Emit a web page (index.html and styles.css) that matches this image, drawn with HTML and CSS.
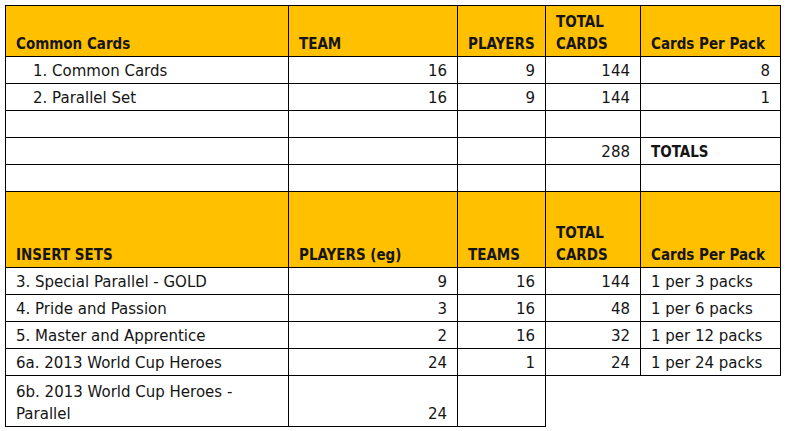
FILE: index.html
```html
<!DOCTYPE html>
<html>
<head>
<meta charset="utf-8">
<link rel="stylesheet" href="styles.css">
</head>
<body>
<table class="sheet">
  <colgroup>
    <col class="c1"><col class="c2"><col class="c3"><col class="c4"><col class="c5">
  </colgroup>
  <tbody>
    <tr class="head h1">
      <td>Common Cards</td><td>TEAM</td><td>PLAYERS</td><td>TOTAL<br>CARDS</td><td>Cards Per Pack</td>
    </tr>
    <tr class="row">
      <td class="ind">1. Common Cards</td><td class="num">16</td><td class="num">9</td><td class="num">144</td><td class="num">8</td>
    </tr>
    <tr class="row">
      <td class="ind">2. Parallel Set</td><td class="num">16</td><td class="num">9</td><td class="num">144</td><td class="num">1</td>
    </tr>
    <tr class="row"><td></td><td></td><td></td><td></td><td></td></tr>
    <tr class="row">
      <td></td><td></td><td></td><td class="num">288</td><td class="bold">TOTALS</td>
    </tr>
    <tr class="row"><td></td><td></td><td></td><td></td><td></td></tr>
    <tr class="head h2">
      <td>INSERT SETS</td><td>PLAYERS (eg)</td><td>TEAMS</td><td>TOTAL<br>CARDS</td><td>Cards Per Pack</td>
    </tr>
    <tr class="row">
      <td>3. Special Parallel - GOLD</td><td class="num">9</td><td class="num">16</td><td class="num">144</td><td>1 per 3 packs</td>
    </tr>
    <tr class="row">
      <td>4. Pride and Passion</td><td class="num">3</td><td class="num">16</td><td class="num">48</td><td>1 per 6 packs</td>
    </tr>
    <tr class="row">
      <td>5. Master and Apprentice</td><td class="num">2</td><td class="num">16</td><td class="num">32</td><td>1 per 12 packs</td>
    </tr>
    <tr class="row">
      <td>6a. 2013 World Cup Heroes</td><td class="num">24</td><td class="num">1</td><td class="num">24</td><td>1 per 24 packs</td>
    </tr>
    <tr class="row tall">
      <td>6b. 2013 World Cup Heroes -<br>Parallel</td><td class="num">24</td><td></td>
    </tr>
  </tbody>
</table>
</body>
</html>
```
FILE: styles.css
```css
html, body {
  margin: 0;
  padding: 0;
  background: #ffffff;
}

body {
  padding: 5px 0 0 5px;
  font-family: "DejaVu Sans", sans-serif;
  font-size: 15px;
  color: #151515;
}

.sheet {
  border-collapse: collapse;
  table-layout: fixed;
  width: 776px;
}

.c1 { width: 283px; }
.c2 { width: 169px; }
.c3 { width: 88px; }
.c4 { width: 95px; }
.c5 { width: 140px; }

.sheet td {
  border: 1px solid #000;
  padding: 0 10px 1px 10px;
  vertical-align: bottom;
  line-height: 22px;
  white-space: nowrap;
  overflow: hidden;
}

.head td,
.sheet td.bold {
  font-family: "DejaVu Sans Condensed", "DejaVu Sans", sans-serif;
  font-weight: bold;
}

.head td {
  background: #ffc000;
}

.h1 { height: 51px; }
.h2 { height: 76px; }
.row { height: 27px; }
.tall { height: 51px; }

.sheet td.ind { padding-left: 27px; }
.sheet td.num { text-align: right; }
```
